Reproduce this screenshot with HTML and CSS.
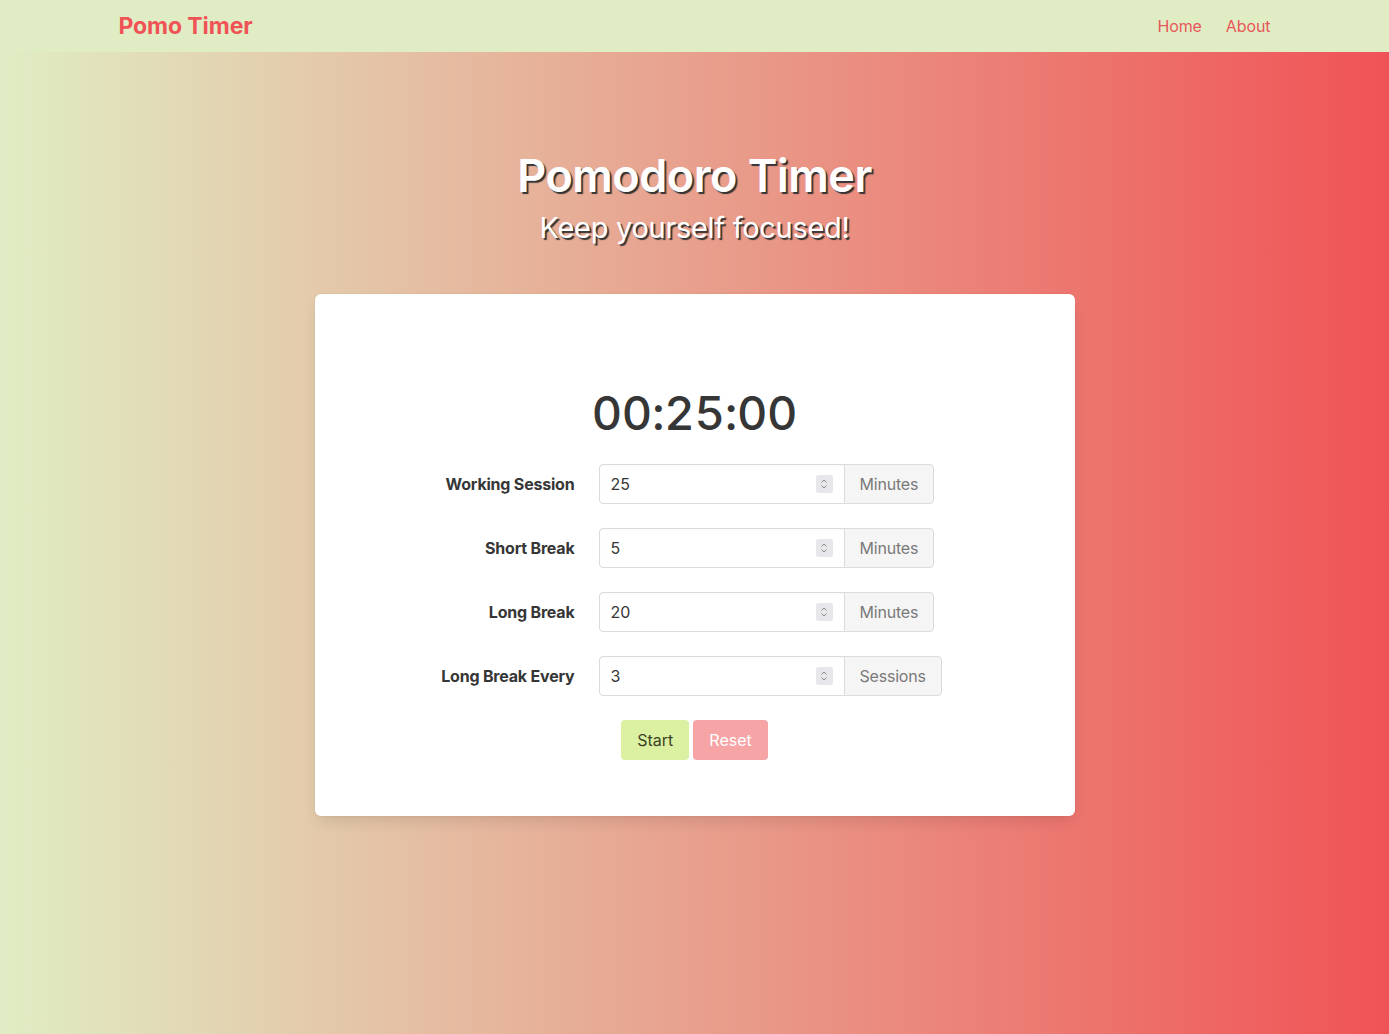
FILE: index.html
```html
<!DOCTYPE html>
<html lang="en">
<head>
<meta charset="utf-8">
<title>Pomo Timer</title>
<link rel="stylesheet" href="styles.css">
</head>
<body>
<nav class="navbar">
  <div class="nav-inner">
    <a class="brand" href="#">Pomo Timer</a>
    <div class="nav-links">
      <a href="#">Home</a>
      <a href="#">About</a>
    </div>
  </div>
</nav>
<main class="hero">
  <h1 class="title">Pomodoro Timer</h1>
  <h2 class="subtitle">Keep yourself focused!</h2>
  <section class="card">
    <div class="timer">00:25:00</div>
    <form class="settings">
      <div class="row">
        <label class="label">Working Session</label>
        <div class="control">
          <div class="input-wrap"><input class="input" type="text" value="25"><span class="spin"><svg viewBox="0 0 16 16" width="16" height="16"><path d="M5.5 6.5 8 4l2.5 2.5M5.5 9.5 8 12l2.5-2.5" fill="none" stroke="#8a8a8a" stroke-width="1"/></svg></span></div>
          <span class="addon">Minutes</span>
        </div>
      </div>
      <div class="row">
        <label class="label">Short Break</label>
        <div class="control">
          <div class="input-wrap"><input class="input" type="text" value="5"><span class="spin"><svg viewBox="0 0 16 16" width="16" height="16"><path d="M5.5 6.5 8 4l2.5 2.5M5.5 9.5 8 12l2.5-2.5" fill="none" stroke="#8a8a8a" stroke-width="1"/></svg></span></div>
          <span class="addon">Minutes</span>
        </div>
      </div>
      <div class="row">
        <label class="label">Long Break</label>
        <div class="control">
          <div class="input-wrap"><input class="input" type="text" value="20"><span class="spin"><svg viewBox="0 0 16 16" width="16" height="16"><path d="M5.5 6.5 8 4l2.5 2.5M5.5 9.5 8 12l2.5-2.5" fill="none" stroke="#8a8a8a" stroke-width="1"/></svg></span></div>
          <span class="addon">Minutes</span>
        </div>
      </div>
      <div class="row">
        <label class="label">Long Break Every</label>
        <div class="control">
          <div class="input-wrap"><input class="input" type="text" value="3"><span class="spin"><svg viewBox="0 0 16 16" width="16" height="16"><path d="M5.5 6.5 8 4l2.5 2.5M5.5 9.5 8 12l2.5-2.5" fill="none" stroke="#8a8a8a" stroke-width="1"/></svg></span></div>
          <span class="addon">Sessions</span>
        </div>
      </div>
      <div class="buttons">
        <button type="button" class="btn start">Start</button>
        <button type="button" class="btn reset">Reset</button>
      </div>
    </form>
  </section>
</main>
</body>
</html>
```
FILE: styles.css
```css
* { box-sizing: border-box; }
html, body { margin: 0; padding: 0; }
body {
  font-family: Inter, "Noto Sans", "Liberation Sans", sans-serif;
  font-size: 16px;
  color: #4a4a4a;
  min-height: 1034px;
  background: linear-gradient(to right, #e0edc4, #f05356);
}
.navbar {
  height: 52px;
  background: #e0edc4;
}
.nav-inner {
  width: 1152px;
  margin: 0 auto;
  height: 52px;
  display: flex;
  align-items: center;
  justify-content: space-between;
}
.brand {
  color: #f05356;
  font-weight: 700;
  font-size: 23px;
  text-decoration: none;
  letter-spacing: -0.1px;
}
.nav-links { display: flex; gap: 24px; }
.nav-links a {
  color: #e8575a;
  text-decoration: none;
  font-size: 16px;
  letter-spacing: -0.1px;
}
.hero {
  display: flex;
  flex-direction: column;
  align-items: center;
  padding-top: 96px;
}
.title {
  margin: 0;
  font-size: 45px;
  line-height: 56px;
  font-weight: 600;
  color: #fff;
  letter-spacing: -0.5px;
  text-shadow: 2px 2px 1px #333;
}
.subtitle {
  margin: 4px 0 0;
  font-size: 29px;
  line-height: 40px;
  font-weight: 400;
  color: #fff;
  letter-spacing: -0.3px;
  text-shadow: 2px 2px 1px #333;
}
.card {
  margin-top: 46px;
  width: 760px;
  background: #fff;
  border-radius: 6px;
  box-shadow: 0 8px 16px -4px rgba(10,10,10,0.12), 0 0 0 1px rgba(10,10,10,0.02);
  padding: 92px 24px 56px;
}
.timer {
  text-align: center;
  font-size: 47px;
  line-height: 54px;
  font-weight: 500;
  color: #363636;
  letter-spacing: -0.3px;
  font-variant-numeric: tabular-nums;
}
.settings {
  margin-top: 24px;
  display: flex;
  flex-direction: column;
  gap: 24px;
}
.row {
  display: flex;
  align-items: center;
  height: 40px;
}
.label {
  flex: 0 0 236px;
  margin-right: 24px;
  text-align: right;
  font-weight: 700;
  color: #363636;
  font-size: 16px;
  letter-spacing: -0.2px;
}
.control { display: flex; }
.input-wrap {
  position: relative;
  width: 246px;
  height: 40px;
}
.input {
  width: 100%;
  height: 40px;
  border: 1px solid #dbdbdb;
  border-radius: 4px 0 0 4px;
  padding: 0 11px;
  font: inherit;
  font-size: 16px;
  color: #363636;
  background: #fff;
  box-shadow: inset 0 0.0625em 0.125em rgba(10,10,10,0.03);
  outline: none;
}
.spin {
  position: absolute;
  right: 12px;
  top: 11px;
  width: 17px;
  height: 18px;
  background: #e8e8ec;
  border-radius: 2px;
  display: flex;
  align-items: center;
  justify-content: center;
}
.addon {
  height: 40px;
  display: flex;
  align-items: center;
  padding: 0 15px;
  margin-left: -1px;
  background: #f5f5f5;
  border: 1px solid #dbdbdb;
  border-radius: 0 4px 4px 0;
  color: #7a7a7a;
  font-size: 16px;
  letter-spacing: -0.2px;
}
.buttons {
  display: flex;
  justify-content: center;
  gap: 4px;
}
.btn {
  height: 40px;
  padding: 0 16px;
  border: none;
  border-radius: 4px;
  font: inherit;
  font-size: 16px;
}
.start { background: #dbf0a1; color: #3b4326; }
.reset { background: #f6a4a5; color: #fff; }
```
